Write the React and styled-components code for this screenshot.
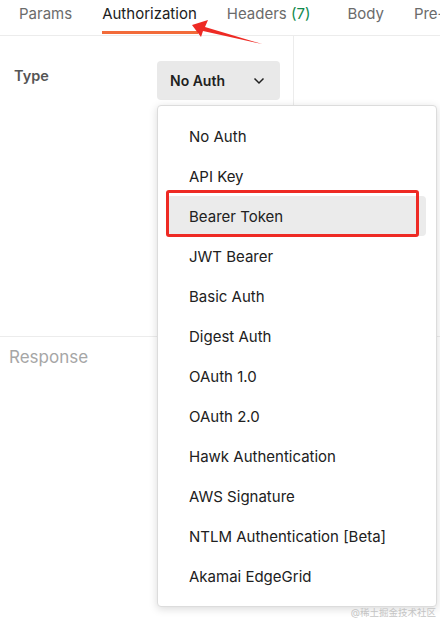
import React from 'react'
import styled, { createGlobalStyle } from 'styled-components'

const GlobalStyle = createGlobalStyle`
    body{
        margin:0;
        background:#fff;
        font-family:Inter, "Noto Sans", "Noto Sans CJK SC", sans-serif;
    }
`;

const tabs = [
    { label: 'Params' },
    { label: 'Authorization', active: true },
    { label: 'Headers', count: '(7)' },
    { label: 'Body' },
    { label: 'Pre-' },
];

const authTypes = [
    'No Auth',
    'API Key',
    'Bearer Token',
    'JWT Bearer',
    'Basic Auth',
    'Digest Auth',
    'OAuth 1.0',
    'OAuth 2.0',
    'Hawk Authentication',
    'AWS Signature',
    'NTLM Authentication [Beta]',
    'Akamai EdgeGrid',
];

function App() {
    return (
        <>
            <GlobalStyle />
            <Page>
                <TabBar>
                    {tabs.map((t) => (
                        <Tab key={t.label} active={t.active} wide={!!t.count}>
                            {t.label}
                            {t.count && <Count> {t.count}</Count>}
                        </Tab>
                    ))}
                </TabBar>
                <Body>
                    <AuthPane>
                        <TypeLabel>Type</TypeLabel>
                        <Select>
                            <span>No Auth</span>
                            <svg width="12" height="8" viewBox="0 0 12 8">
                                <path d="M1.5 1.5 L6 6 L10.5 1.5" fill="none" stroke="#212121" strokeWidth="1.5" />
                            </svg>
                        </Select>
                    </AuthPane>
                    <SidePane />
                </Body>
                <Response>Response</Response>

                <Menu>
                    {authTypes.map((name) => (
                        <MenuItem key={name} hovered={name === 'Bearer Token'}>{name}</MenuItem>
                    ))}
                    <Highlight />
                </Menu>

                <Arrow width="80" height="40" viewBox="0 0 80 40">
                    <polygon points="0,6 16,1 13,8 70,25 11,12 9,18" fill="#ee2a24" />
                </Arrow>

                <Watermark>@稀土掘金技术社区</Watermark>
            </Page>
        </>
    )
}

const Page = styled.div`
    position:relative;
    width:440px;
    height:622px;
    overflow:hidden;
`;

const TabBar = styled.div`
    display:flex;
    align-items:flex-start;
    height:35px;
    padding-left:4px;
    border-bottom:1px solid #ececec;
    white-space:nowrap;
`;

const Tab = styled.div`
    position:relative;
    padding:4px ${(props) => (props.wide ? '22px' : '15px')} 0 15px;
    height:31px;
    font-size:15px;
    line-height:20px;
    color:${(props) => (props.active ? '#212121' : '#6b6b6b')};
    &::after{
        content:'';
        display:${(props) => (props.active ? 'block' : 'none')};
        position:absolute;
        left:15px;
        right:14px;
        top:31px;
        height:3px;
        background:#f26b3a;
    }
`;

const Count = styled.span`
    color:#0f8a4c;
`;

const Body = styled.div`
    display:flex;
    height:300px;
    border-bottom:1px solid #ececec;
`;

const AuthPane = styled.div`
    width:294px;
    display:flex;
    align-items:flex-start;
    padding:25px 0 0 14px;
    box-sizing:border-box;
    border-right:1px solid #ececec;
`;

const TypeLabel = styled.div`
    width:143px;
    padding-top:6px;
    font-size:14.5px;
    font-weight:600;
    color:#555;
`;

const Select = styled.div`
    display:flex;
    align-items:center;
    justify-content:space-between;
    width:123px;
    height:39px;
    box-sizing:border-box;
    padding:0 15px 0 13px;
    background:#e9e9e9;
    border-radius:4px;
    font-size:14px;
    font-weight:600;
    color:#212121;
`;

const SidePane = styled.div`
    flex:1;
`;

const Response = styled.div`
    padding:10px 9px;
    font-size:17px;
    color:#a6a6a6;
`;

const Menu = styled.div`
    position:absolute;
    left:157px;
    top:105px;
    width:280px;
    box-sizing:border-box;
    padding:10px 10px 10px 8px;
    background:#fff;
    border:1px solid #dcdcdc;
    border-radius:4px;
    box-shadow:0 2px 8px rgba(0,0,0,0.15);
`;

const MenuItem = styled.div`
    height:40px;
    display:flex;
    align-items:center;
    padding-left:23px;
    font-size:15px;
    color:#212121;
    border-radius:4px;
    background:${(props) => (props.hovered ? '#ebebeb' : 'transparent')};
`;

const Highlight = styled.div`
    position:absolute;
    left:8px;
    top:84px;
    width:253px;
    height:47px;
    box-sizing:border-box;
    border:3px solid #ee2a24;
    border-radius:3px;
`;

const Arrow = styled.svg`
    position:absolute;
    left:192px;
    top:19px;
`;

const Watermark = styled.div`
    position:absolute;
    right:4px;
    bottom:3px;
    font-size:9.5px;
    color:#c4c4c4;
`;

export default App;
